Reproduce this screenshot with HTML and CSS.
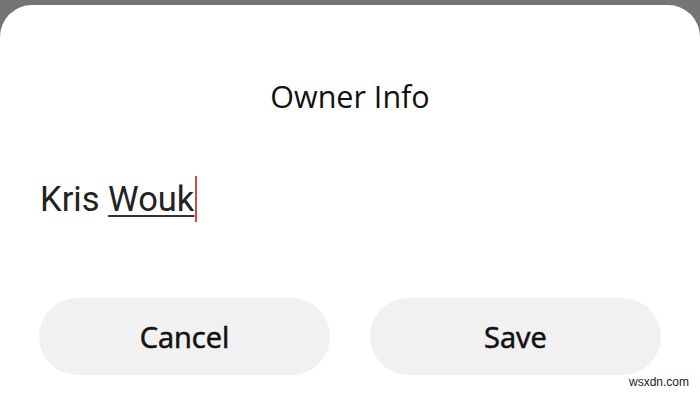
FILE: index.html
```html
<!DOCTYPE html>
<html>
<head>
<meta charset="utf-8">
<link rel="stylesheet" href="styles.css">
</head>
<body>
<div class="sheet">
  <h1 class="title">Owner Info</h1>
  <div class="field"><span class="plain">Kris </span><span class="word">Wouk</span><span class="cursor"></span></div>
  <div class="actions">
    <button class="btn">Cancel</button>
    <button class="btn">Save</button>
  </div>
  <span class="mark">wsxdn.com</span>
</div>
</body>
</html>
```
FILE: styles.css
```css
html, body {
  margin: 0;
  padding: 0;
  width: 700px;
  height: 393px;
  overflow: hidden;
  background: #757575;
}
.sheet {
  position: relative;
  margin-top: 5px;
  height: 388px;
  background: #ffffff;
  border-radius: 32px 32px 0 0;
  display: flex;
  flex-direction: column;
  box-sizing: border-box;
  padding: 0 39px;
}
.title {
  margin: 71px 0 0;
  font-family: "Open Sans", sans-serif;
  font-weight: 400;
  font-size: 30.5px;
  line-height: 40px;
  color: #111;
  text-align: center;
}
.field {
  margin-top: 60px;
  display: flex;
  align-items: center;
  font-family: Roboto, sans-serif;
  font-size: 34.5px;
  line-height: 44px;
  color: #222;
  padding-left: 1px;
}
.plain { white-space: pre; }
.word {
  text-decoration: underline;
  text-decoration-thickness: 2px;
  text-underline-offset: 4px;
  text-decoration-color: #333;
}
.cursor {
  width: 2px;
  height: 46px;
  background: #d9473c;
  margin-left: 1px;
}
.actions {
  margin-top: 76px;
  display: flex;
  gap: 40px;
}
.btn {
  flex: 1;
  height: 77px;
  border: none;
  border-radius: 39px;
  background: #f1f1f1;
  font-family: "Open Sans", sans-serif;
  font-size: 29px;
  font-weight: 400;
  -webkit-text-stroke: 0.6px #111;
  color: #111;
  padding: 0;
}
.mark {
  position: absolute;
  right: 11px;
  bottom: 4px;
  font-family: "Liberation Sans", Arial, sans-serif;
  font-size: 12px;
  color: #222;
}
```
